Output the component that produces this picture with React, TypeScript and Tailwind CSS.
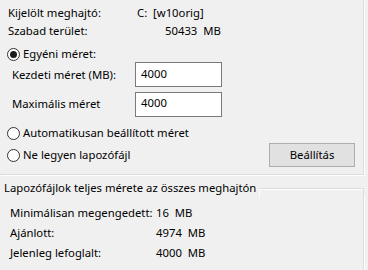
export default function App() {
  return (
    <div className="w-[368px] h-[270px] overflow-hidden bg-[#f0f0f0] text-[11.3px] leading-none text-black font-['Noto_Sans',sans-serif]">
      {/* Lapozófájl a kijelölt meghajtón */}
      <div className="w-[364px] h-[175px] border-r border-b border-[#dcdcdc] shadow-[1px_1px_0_#ffffff] flex flex-col pt-[4px]">
        <div className="flex items-center h-[18px]">
          <span className="w-[137px] pl-[8px]">Kijelölt meghajtó:</span>
          <span className="whitespace-pre">C:  [w10orig]</span>
        </div>
        <div className="flex items-center h-[18px]">
          <span className="w-[165px] pl-[8px]">Szabad terület:</span>
          <span className="whitespace-pre">50433  MB</span>
        </div>

        <label className="flex items-center h-[16px] mt-[6px] pl-[7px] gap-[3px]">
          <Radio checked />
          <span>Egyéni méret:</span>
        </label>

        <div className="flex items-center h-[25px]">
          <span className="w-[135px] pl-[12px]">Kezdeti méret (MB):</span>
          <SizeInput value="4000" />
        </div>
        <div className="flex items-center h-[26px] mt-[4px]">
          <span className="w-[135px] pl-[12px]">Maximális méret</span>
          <SizeInput value="4000" />
        </div>

        <label className="flex items-center h-[18px] mt-[7px] pl-[7px] gap-[3px]">
          <Radio />
          <span>Automatikusan beállított méret</span>
        </label>

        <div className="flex items-center h-[24px] mt-[1px] pl-[7px]">
          <label className="flex items-center gap-[3px] flex-1">
            <Radio />
            <span>Ne legyen lapozófájl</span>
          </label>
          <button className="w-[86px] h-[24px] mr-[8px] bg-[#e1e1e1] border border-[#adadad] text-black">
            Beállítás
          </button>
        </div>
      </div>

      {/* Összesítés */}
      <div className="w-[364px] flex flex-col mt-[5px]">
        <div className="flex items-center h-[16px]">
          <span className="pl-[4px] pr-[3px] whitespace-nowrap">Lapozófájlok teljes mérete az összes meghajtón</span>
          <div className="flex-1 h-[9px] mt-[9px] border-t border-r border-[#dcdcdc] shadow-[1px_1px_0_#ffffff_inset]" />
        </div>
        <div className="border-r border-[#dcdcdc] shadow-[1px_0_0_#ffffff] h-[80px] flex flex-col pt-[7px]">
          <Row label="Minimálisan megengedett:" value="16  MB" />
          <Row label="Ajánlott:" value="4974  MB" />
          <Row label="Jelenleg lefoglalt:" value="4000  MB" />
        </div>
      </div>
    </div>
  )
}

function Row({ label, value }: { label: string; value: string }) {
  return (
    <div className="flex items-center h-[20px]">
      <span className="w-[156px] pl-[10px]">{label}</span>
      <span className="whitespace-pre">{value}</span>
    </div>
  )
}

function SizeInput({ value }: { value: string }) {
  return (
    <input
      type="text"
      defaultValue={value}
      className="w-[87px] h-[25px] border border-[#7a7a7a] bg-white pl-[5px] pb-[3px] outline-none text-[11.3px] font-['Noto_Sans',sans-serif]"
    />
  )
}

function Radio({ checked = false }: { checked?: boolean }) {
  return (
    <span className="w-[13px] h-[13px] rounded-full border border-[#333333] bg-white flex items-center justify-center shrink-0">
      {checked && <span className="w-[7px] h-[7px] rounded-full bg-[#1a1a1a]" />}
    </span>
  )
}
